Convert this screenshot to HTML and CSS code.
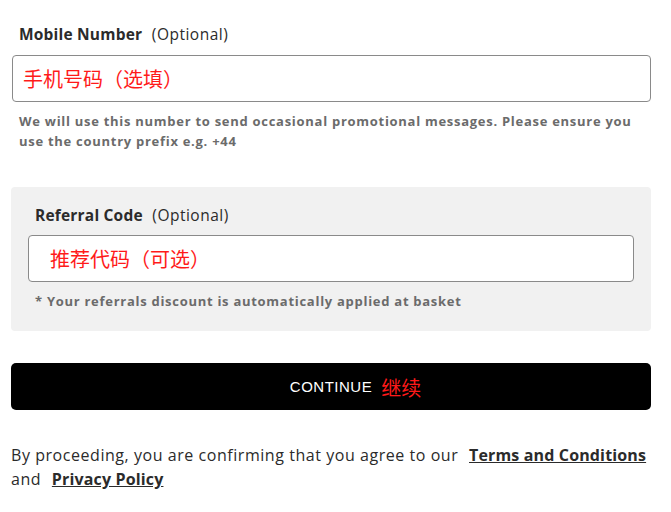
FILE: index.html
```html
<!DOCTYPE html>
<html lang="en">
<head>
    <meta charset="UTF-8">
    <meta name="viewport" content="width=device-width, initial-scale=1.0">
    <title>Contact Details</title>
    <link rel="stylesheet" href="styles.css">
</head>
<body>
    <form class="details-form" onsubmit="return false;">
        <div class="field">
            <label for="mobile" class="field-label"><strong>Mobile Number</strong> (Optional)</label>
            <input type="tel" id="mobile" class="text-input" placeholder="手机号码（选填）">
            <p class="field-hint">We will use this number to send occasional promotional messages. Please ensure you use the country prefix e.g. +44</p>
        </div>

        <div class="referral-box">
            <label for="referral" class="field-label"><strong>Referral Code</strong> (Optional)</label>
            <input type="text" id="referral" class="text-input referral-input" placeholder="推荐代码（可选）">
            <p class="field-hint">* Your referrals discount is automatically applied at basket</p>
        </div>

        <button type="submit" class="continue-btn"><span class="btn-label">CONTINUE<span class="cn">继续</span></span></button>

        <p class="terms">By proceeding, you are confirming that you agree to our <a href="#">Terms and Conditions</a> and <a href="#">Privacy Policy</a></p>
    </form>
</body>
</html>
```

FILE: styles.css
```css
body {
    font-family: "Open Sans", "Noto Sans CJK SC", sans-serif;
    color: #2b2b2b;
    background: #fff;
    margin: 0;
    padding: 0;
}
.details-form {
    padding: 24px 20px 0 11px;
}
.field {
    padding-left: 1px;
}
.field-label {
    display: block;
    font-size: 15.5px;
    line-height: 20px;
    letter-spacing: 0.5px;
    margin: 0 0 11px 7px;
    color: #2b2b2b;
}
.field-label strong {
    font-weight: 700;
    letter-spacing: 0.2px;
    margin-right: 5px;
}
.text-input {
    display: block;
    box-sizing: border-box;
    width: 100%;
    height: 47px;
    padding: 0 10px;
    border: 1px solid #8a8a8a;
    border-radius: 4px;
    font-family: "Noto Sans CJK SC", "Open Sans", sans-serif;
    font-size: 20px;
    background: #fff;
}
.text-input::placeholder {
    color: #ff1a1a;
    opacity: 1;
}
.referral-input {
    padding-left: 21px;
}
.field-hint {
    font-size: 13px;
    font-weight: 700;
    line-height: 20px;
    letter-spacing: 0.72px;
    color: #6b6b6b;
    margin: 9px 0 0 7px;
}
.referral-box {
    margin-top: 36px;
    padding: 18px 17px 20px 17px;
    background: #f1f1f1;
    border-radius: 4px;
}
.referral-box .field-label {
    margin-left: 7px;
    margin-bottom: 10px;
}
.referral-box .field-hint {
    margin-left: 7px;
}
.continue-btn {
    display: block;
    width: 100%;
    height: 47px;
    margin-top: 32px;
    padding: 0;
    border: none;
    border-radius: 5px;
    background: #000;
    color: #fff;
    font-family: "Liberation Sans", Arial, sans-serif;
    font-size: 15px;
    letter-spacing: 0.5px;
    cursor: pointer;
}
.btn-label {
    position: relative;
}
/* translation note sits after the centred label */
.continue-btn .cn {
    position: absolute;
    left: 100%;
    top: 50%;
    transform: translateY(-50%);
    margin-left: 9px;
    font-family: "Noto Sans CJK SC", sans-serif;
    font-size: 20px;
    letter-spacing: 0;
    white-space: nowrap;
    color: #ff1a1a;
}
.terms {
    font-size: 16px;
    line-height: 24px;
    color: #2b2b2b;
    margin: 33px 0 0;
    letter-spacing: 0.55px;
}
.terms a {
    color: #2b2b2b;
    font-weight: 700;
    letter-spacing: 0.15px;
    margin: 0 1px 0 6px;
}
```
